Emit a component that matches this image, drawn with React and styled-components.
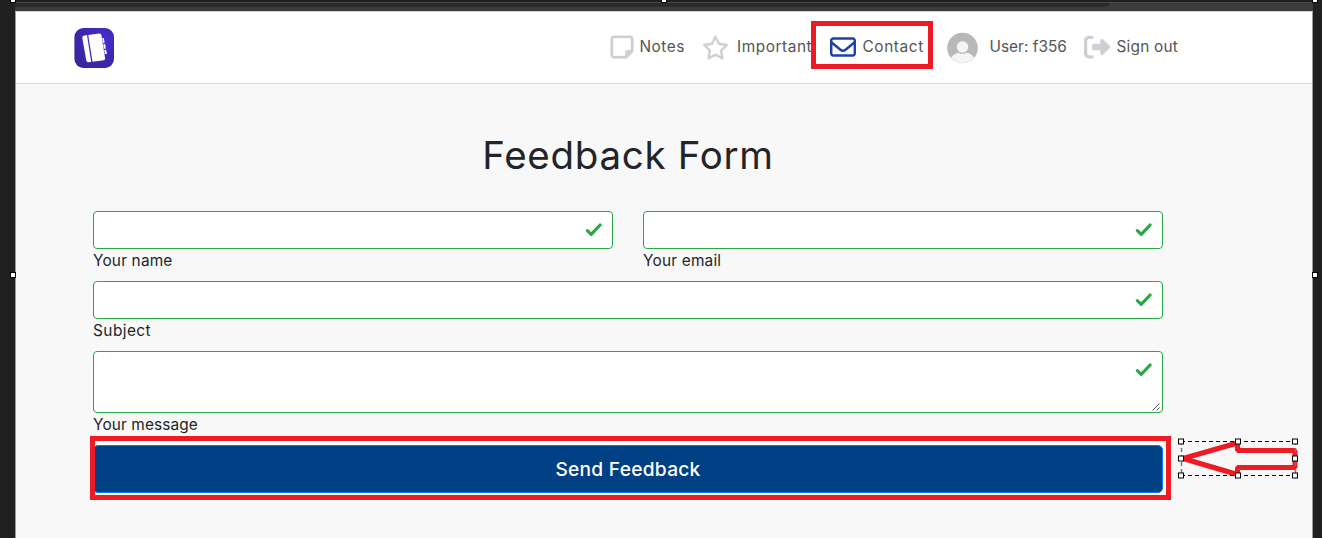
import React from 'react';
import styled, { createGlobalStyle } from 'styled-components';
import { FaRegNoteSticky, FaRegStar, FaRegEnvelope, FaRightFromBracket } from 'react-icons/fa6';

const GlobalStyle = createGlobalStyle`
  * { box-sizing: border-box; }
  body { margin: 0; background: #202020; font-family: Inter, "Liberation Sans", sans-serif; color: #212529; overflow: hidden; }
`;

const Screen = styled.div`
  position: relative;
  width: 1322px;
  height: 538px;
  padding: 2px 9px 0 15px;
  overflow: hidden;
  background: #202020;
`;
const TabStrip = styled.div`
  height: 9px;
  border-top: 1px solid #484848;
  background: #3b3b3b;
`;
const Tab = styled.div`
  width: 1095px;
  height: 4px;
  background: #2b2b2b;
  border-bottom-right-radius: 8px 4px;
`;
const Page = styled.div`
  height: 527px;
  border: 1px solid #999;
  border-top-color: #d5d5d5;
  border-bottom: 0;
  background: #f8f8f8;
`;
const Header = styled.header`
  display: flex;
  align-items: center;
  height: 72px;
  padding: 1px 0 0 58px;
  background: #fff;
  border-bottom: 1px solid #dcdcdc;
`;
const Nav = styled.nav`
  display: flex;
  align-items: center;
  margin: 0 0 2px 495px;
`;
const NavLink = styled.a`
  display: flex;
  align-items: center;
  flex: none;
  width: ${p => p.$width}px;
  color: ${p => (p.$active ? '#1e40af' : '#cfced4')};
  svg { flex: none; overflow: visible; }
`;
const NavText = styled.span`
  margin-left: ${p => p.$gap}px;
  font-size: 15.4px;
  line-height: 24px;
  letter-spacing: ${p => p.$track || 0}px;
  color: #555;
  white-space: nowrap;
`;
const Form = styled.form`
  display: flex;
  flex-direction: column;
  width: 1070px;
  margin-left: 77px;
`;
const Title = styled.h1`
  margin: 47px 0 32px;
  font-size: 38.5px;
  line-height: 48px;
  font-weight: 400;
  letter-spacing: ${p => p.$track}px;
  text-align: center;
`;
const Row = styled.div`
  display: flex;
  gap: 30px;
`;
const Field = styled.label`
  flex: 1;
  display: flex;
  flex-direction: column;
  height: ${p => p.$height || 70}px;
`;
const Control = styled.div`
  display: flex;
  flex-direction: column;
  justify-content: space-between;
  align-items: flex-end;
  flex: none;
  height: ${p => p.$height || 38}px;
  padding: 10px 10px 0 0;
  border: 1px solid #28a745;
  border-radius: 4px;
  background: #fff;
`;
const Grip = styled.svg`
  margin-right: -9px;
`;
const Caption = styled.span`
  font-size: 15.4px;
  line-height: 24px;
  letter-spacing: ${p => p.$track || 0}px;
`;
const Submit = styled.button`
  height: 48px;
  padding: 0;
  border: 1px solid #007bff;
  border-radius: 5px;
  background: #004085;
  color: #fff;
  font: 500 19.2px/30px Inter, sans-serif;
  letter-spacing: ${p => p.$track}px;
  box-shadow: 0 0 0 4px #fff;
`;
const Highlight = styled.div`
  position: absolute;
  left: ${p => p.$x}px;
  top: ${p => p.$y}px;
  width: ${p => p.$w}px;
  height: ${p => p.$h}px;
  border: 5px solid #ed1c24;
`;
const Arrow = styled.svg`
  position: absolute;
  left: 1176px;
  top: 436px;
`;
const Handle = styled.i`
  position: absolute;
  left: ${p => p.$x}px;
  top: ${p => p.$y}px;
  width: 4px;
  height: 4px;
  background: #fff;
  outline: 1px solid #000;
`;

const Logo = () => (
  <svg width="40" height="40" viewBox="0 0 40 40">
    <defs>
      <radialGradient id="violet" cx=".7" cy=".3" r=".85">
        <stop offset="0" stopColor="#482bd0" />
        <stop offset="1" stopColor="#38249a" />
      </radialGradient>
    </defs>
    <rect x=".4" width="39.6" height="40" rx="9" fill="url(#violet)" />
    <g fill="#fff">
      <path d="M9.6 7.7 13 7.1 17.2 34 14.5 34.3Q12.7 34.5 12.3 32.6L8.3 10Q8 8 9.6 7.7Z" />
      <path d="M14.2 7 25.2 5.4Q27 5.2 27.4 7L31.1 30.3Q31.3 32 29.6 32.3L18.5 33.8Z" />
      <path d="M28.3 10.1 29.8 10 30.6 14.8 29 15ZM29.3 16.3 31.1 16.1 31.9 20.4 29.9 20.7ZM30.2 22 32.1 21.7 33 25.8 31 26.3Z" />
    </g>
  </svg>
);
const Check = () => (
  <svg width="17" height="17" viewBox="0 0 17 17" fill="none" stroke="#28a745" strokeWidth="3.1" strokeLinecap="round" strokeLinejoin="round">
    <path d="M2.4 8.7 6.2 12.4 15.1 3" />
  </svg>
);
const Avatar = () => (
  <svg width="31" height="31" viewBox="0 0 31 31">
    <circle cx="15.5" cy="16" r="15.3" fill="#b8b8b8" />
    <circle cx="15.5" cy="15" r="5.8" fill="#f4f4f4" />
    <path d="M3.8 25.8C6.2 22.5 9 20.9 11.5 20.7Q15.5 23.2 19.5 20.7C22.5 21.1 25 22.7 27.2 25.8A15.3 15.3 0 0 1 3.8 25.8Z" fill="#f4f4f4" />
  </svg>
);
const handles = [[5, 5], [62, 5], [119, 5], [5, 22], [119, 22], [5, 39], [62, 39], [119, 39]];

export default function App() {
  return (
    <Screen>
      <GlobalStyle />
      <TabStrip><Tab /></TabStrip>
      <Page>
        <Header>
          <Logo />
          <Nav>
            <NavLink $width={93}><FaRegNoteSticky size={26} strokeWidth={5} stroke="currentColor" /><NavText $gap={4.5} $track={0.5}>Notes</NavText></NavLink>
            <NavLink $width={128}><FaRegStar size={27} strokeWidth={3} stroke="currentColor" /><NavText $gap={8} $track={0.55}>Important</NavText></NavLink>
            <NavLink $width={116.5} $active><FaRegEnvelope size={26} /><NavText $gap={6.5} $track={0.6}>Contact</NavText></NavLink>
            <NavLink $width={137.5}><Avatar /><NavText $gap={12} $track={0.02}>User: f356</NavText></NavLink>
            <NavLink $width={100}><FaRightFromBracket size={26} /><NavText $gap={6.5} $track={0.2}>Sign out</NavText></NavLink>
          </Nav>
        </Header>
        <Form>
          <Title $track={0.7}>Feedback Form</Title>
          <Row>
            <Field><Control><Check /></Control><Caption $track={0.18}>Your name</Caption></Field>
            <Field><Control><Check /></Control><Caption $track={0.2}>Your email</Caption></Field>
          </Row>
          <Row><Field><Control><Check /></Control><Caption $track={0.45}>Subject</Caption></Field></Row>
          <Row>
            <Field $height={94}>
              <Control $height={62}>
                <Check />
                <Grip width="9" height="9" viewBox="0 0 9 9" stroke="#555" strokeWidth="1"><path d="M0.5 7.5 7.5 .5M4.5 7.5 7.5 4.5" /></Grip>
              </Control>
              <Caption $track={0.12}>Your message</Caption>
            </Field>
          </Row>
          <Submit type="button" $track={0.25}>Send Feedback</Submit>
        </Form>
      </Page>
      <Highlight $x={811} $y={21} $w={122} $h={48} />
      <Highlight $x={90} $y={436} $w={1081} $h={64} />
      <Arrow width="124" height="46" viewBox="0 0 124 46">
        <path d="M7 22.5 61.5 7V14.5H119V31.5H61.5V38.5Z" fill="none" stroke="#ed1c24" strokeWidth="5" strokeLinejoin="bevel" />
        <path d="M5 5.5H119M5 39.5H119" stroke="#000" strokeDasharray="4 3" />
        <path d="M5.5 5V40M119.5 5V40" stroke="#777" strokeWidth="1.5" strokeDasharray="4 3" />
        {handles.map(([x, y]) => <rect key={`${x}-${y}`} x={x - 2.5} y={y - 2} width="5" height="5" fill="#fff" stroke="#000" />)}
      </Arrow>
      <Handle $x={11} $y={-2} />
      <Handle $x={662} $y={-2} />
      <Handle $x={1313} $y={-2} />
      <Handle $x={11} $y={273} />
      <Handle $x={1313} $y={273} />
    </Screen>
  );
}
